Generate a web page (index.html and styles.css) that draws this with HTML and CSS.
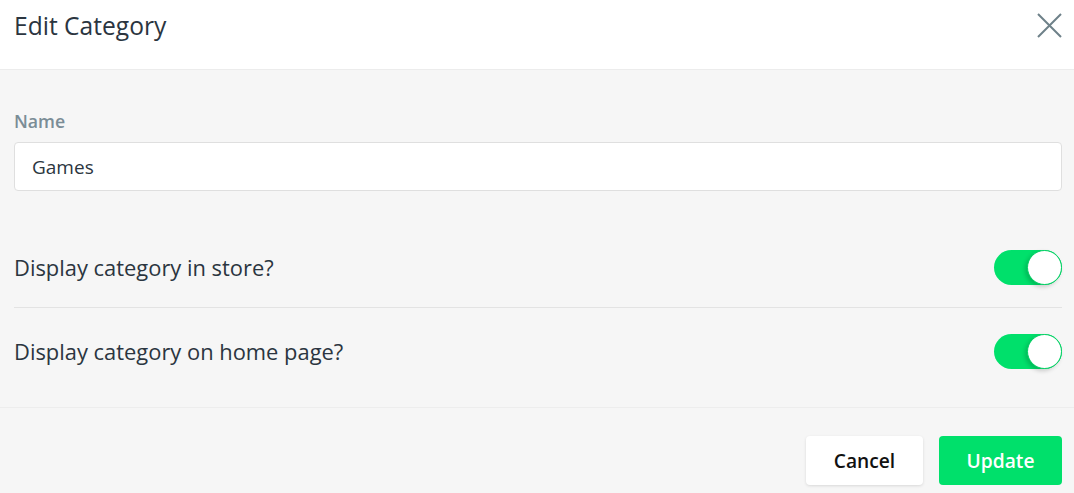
FILE: index.html
```html
<!DOCTYPE html>
<html lang="en">
<head>
<meta charset="utf-8">
<title>Edit Category</title>
<link rel="stylesheet" href="styles.css">
</head>
<body>
<div class="modal">
  <header class="modal-header">
    <h1 class="modal-title">Edit Category</h1>
    <button class="close-btn" aria-label="Close">
      <svg width="25" height="25" viewBox="0 0 25 25"><path d="M1 1 L24 24 M24 1 L1 24" stroke="#6e8189" stroke-width="2" fill="none"/></svg>
    </button>
  </header>
  <section class="modal-body">
    <label class="field-label" for="name">Name</label>
    <input class="text-input" id="name" type="text" value="Games">
    <div class="toggles">
      <div class="toggle-row first">
        <span class="toggle-label">Display category in store?</span>
        <span class="switch"><span class="knob"></span></span>
      </div>
      <div class="toggle-row second">
        <span class="toggle-label">Display category on home page?</span>
        <span class="switch"><span class="knob"></span></span>
      </div>
    </div>
  </section>
  <footer class="modal-footer">
    <button class="btn btn-cancel">Cancel</button>
    <button class="btn btn-update">Update</button>
  </footer>
</div>
</body>
</html>
```
FILE: styles.css
```css
html, body {
  margin: 0;
  padding: 0;
  background: #f6f6f6;
  font-family: "Open Sans", "Noto Sans", sans-serif;
  color: #2b3540;
}
.modal {
  width: 1074px;
  height: 493px;
  overflow: hidden;
}
.modal-header {
  background: #ffffff;
  height: 69px;
  border-bottom: 1px solid #ececec;
  display: flex;
  justify-content: space-between;
  align-items: flex-start;
  padding: 0 12px 0 14px;
}
.modal-title {
  margin: 9px 0 0;
  font-size: 24.6px;
  line-height: 34px;
  font-weight: 400;
  color: #2b3540;
}
.close-btn {
  margin-top: 13px;
  padding: 0;
  border: none;
  background: none;
  width: 25px;
  height: 25px;
  display: block;
}
.close-btn svg { display: block; }
.modal-body {
  padding: 40px 12px 0 14px;
}
.field-label {
  display: block;
  font-size: 17.7px;
  line-height: 22px;
  font-weight: 600;
  color: #7b8d96;
  margin-bottom: 10px;
}
.text-input {
  display: block;
  box-sizing: border-box;
  width: 100%;
  height: 49px;
  margin: 0;
  padding: 0 17px;
  border: 1px solid #dfdfdf;
  border-radius: 4px;
  background: #ffffff;
  font-family: inherit;
  font-size: 19px;
  color: #2b3540;
  outline: none;
}
.toggles {
  margin-top: 36px;
}
.toggle-row {
  display: flex;
  align-items: center;
  justify-content: space-between;
}
.toggle-row.first {
  padding: 23px 0 22px;
  border-bottom: 1px solid #e3e3e3;
}
.toggle-row.second {
  padding: 26px 0 38px;
}
.toggle-label {
  font-size: 21.9px;
  line-height: 28px;
  color: #2b3540;
}
.switch {
  position: relative;
  display: block;
  width: 68px;
  height: 35px;
  border-radius: 18px;
  background: #00e06b;
}
.knob {
  position: absolute;
  top: 0;
  right: 0;
  box-sizing: border-box;
  width: 35px;
  height: 35px;
  border-radius: 50%;
  background: #ffffff;
  border: 1px solid #00d062;
  box-shadow: -2px 2px 4px rgba(0, 0, 0, 0.18);
}
.modal-footer {
  border-top: 1px solid #ededed;
  display: flex;
  justify-content: flex-end;
  gap: 16px;
  padding: 28px 12px 0 14px;
}
.btn {
  height: 49px;
  border: none;
  border-radius: 4px;
  font-family: inherit;
  font-size: 19.2px;
  font-weight: 600;
  padding: 0;
}
.btn-cancel {
  width: 117px;
  background: #ffffff;
  color: #111111;
  box-shadow: 0 1px 3px rgba(0, 0, 0, 0.12);
}
.btn-update {
  width: 123px;
  background: #00e06b;
  color: #ffffff;
}
```
